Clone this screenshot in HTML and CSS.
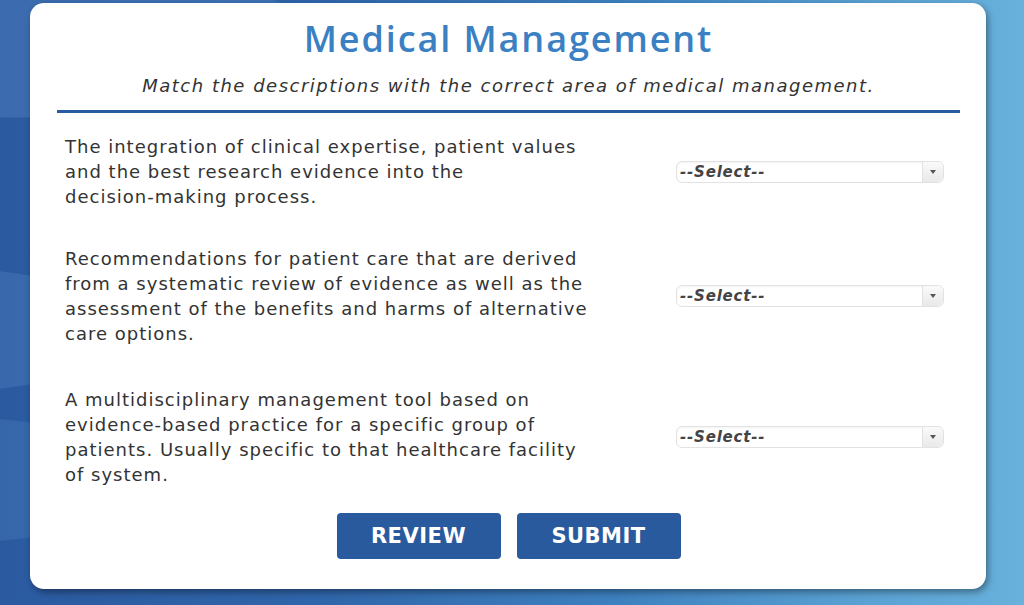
FILE: index.html
```html
<!DOCTYPE html>
<html lang="en">
<head>
    <meta charset="UTF-8">
    <meta name="viewport" content="width=device-width, initial-scale=1.0">
    <title>Medical Management</title>
    <link rel="stylesheet" href="styles.css">
</head>
<body>

<div class="card">
    <h1>Medical Management</h1>
    <p class="intro">Match the descriptions with the correct area of medical management.</p>
    <div class="rule"></div>

    <div class="match-list">
        <div class="match-row">
            <p>The integration of clinical expertise, patient values and the best research evidence into the decision&#8209;making process.</p>
            <div class="select-box">
                <select name="q1">
                    <option>--Select--</option>
                    <option>Evidence-based practice</option>
                    <option>Clinical guidelines</option>
                    <option>Clinical pathway</option>
                </select>
                <span class="arrow"></span>
            </div>
        </div>

        <div class="match-row">
            <p>Recommendations for patient care that are derived from a systematic review of evidence as well as the assessment of the benefits and harms of alternative care options.</p>
            <div class="select-box">
                <select name="q2">
                    <option>--Select--</option>
                    <option>Evidence-based practice</option>
                    <option>Clinical guidelines</option>
                    <option>Clinical pathway</option>
                </select>
                <span class="arrow"></span>
            </div>
        </div>

        <div class="match-row">
            <p>A multidisciplinary management tool based on evidence&#8209;based practice for a specific group of patients. Usually specific to that healthcare facility of system.</p>
            <div class="select-box">
                <select name="q3">
                    <option>--Select--</option>
                    <option>Evidence-based practice</option>
                    <option>Clinical guidelines</option>
                    <option>Clinical pathway</option>
                </select>
                <span class="arrow"></span>
            </div>
        </div>
    </div>

    <div class="buttons">
        <button type="button">REVIEW</button>
        <button type="button">SUBMIT</button>
    </div>
</div>

</body>
</html>
```

FILE: styles.css
```css
body {
    margin: 0;
    height: 605px;
    overflow: hidden;
    font-family: "DejaVu Sans", Arial, sans-serif;
    background:
        radial-gradient(ellipse 420px 110px at 20px 40px, rgba(90, 140, 200, 0.35) 70%, transparent 71%),
        radial-gradient(ellipse 300px 90px at -80px 330px, rgba(90, 140, 200, 0.3) 70%, transparent 71%),
        radial-gradient(ellipse 300px 90px at -60px 480px, rgba(90, 140, 200, 0.25) 70%, transparent 71%),
        linear-gradient(90deg, #2b5aa0 0%, #2f65aa 30%, #3d80bf 60%, #5aa2d3 85%, #68b1dc 100%);
}
.card {
    margin: 3px 0 0 30px;
    width: 956px;
    height: 586px;
    box-sizing: border-box;
    padding: 12px 26px 0 27px;
    background-color: white;
    border-radius: 14px;
    box-shadow: 2px 3px 7px rgba(0, 0, 0, 0.4);
}
.card h1 {
    margin: 0;
    font-family: "Open Sans", Arial, sans-serif;
    font-size: 36px;
    font-weight: 600;
    line-height: 48px;
    text-align: center;
    color: #3a80c2;
    letter-spacing: 1.9px;
}
.intro {
    margin: 10px 0 0;
    font-size: 18px;
    font-style: italic;
    line-height: 26px;
    text-align: center;
    color: #333;
    letter-spacing: 1.5px;
}
.rule {
    margin-top: 11px;
    height: 3px;
    background-color: #2a5aa0;
}
.match-list {
    display: flex;
    flex-direction: column;
    gap: 37px;
    margin-top: 21px;
}
.match-row {
    display: grid;
    grid-template-columns: 1fr 268px;
    align-items: center;
    padding: 0 16px 0 8px;
}
.match-row:last-child {
    margin-top: 4px;
}
.match-row p {
    margin: 0;
    max-width: 537px;
    font-size: 18px;
    line-height: 25px;
    color: #333;
    letter-spacing: 1px;
}
.select-box {
    position: relative;
    height: 22px;
}
.select-box select {
    width: 100%;
    height: 22px;
    padding: 0 0 0 3px;
    border: 1px solid #e2e2e2;
    border-radius: 6px;
    background-color: white;
    font-family: "DejaVu Sans", Arial, sans-serif;
    font-size: 15px;
    font-weight: bold;
    font-style: italic;
    letter-spacing: 0.8px;
    color: #444;
    appearance: none;
    -webkit-appearance: none;
    box-shadow: inset 0 1px 2px rgba(0, 0, 0, 0.05);
}
.arrow {
    position: absolute;
    top: 1px;
    right: 1px;
    width: 20px;
    height: 20px;
    border-left: 1px solid #e2e2e2;
    border-radius: 0 6px 6px 0;
    background: linear-gradient(#fafafa, #e9e9e9);
    pointer-events: none;
}
.arrow::after {
    content: "";
    position: absolute;
    top: 8px;
    left: 7px;
    border-left: 3px solid transparent;
    border-right: 3px solid transparent;
    border-top: 4px solid #555;
}
.buttons {
    display: flex;
    justify-content: center;
    gap: 16px;
    margin-top: 26px;
}
.buttons button {
    width: 164px;
    height: 46px;
    border: none;
    border-radius: 4px;
    background-color: #2a5a9e;
    color: white;
    font-family: "DejaVu Sans", Arial, sans-serif;
    font-size: 21px;
    font-weight: bold;
    letter-spacing: 0.5px;
    cursor: pointer;
}
.buttons button:hover {
    background-color: #234d88;
}
```
